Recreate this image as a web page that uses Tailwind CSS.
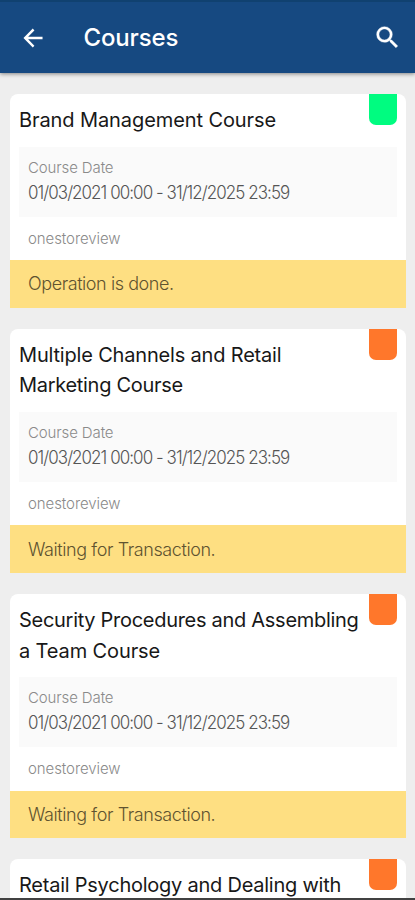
<!DOCTYPE html>
<html lang="en">
<head>
<meta charset="utf-8">
<meta name="viewport" content="width=device-width, initial-scale=1">
<title>Courses</title>
<script src="https://cdn.jsdelivr.net/npm/@tailwindcss/browser@4"></script>
</head>
<body class="h-[900px] overflow-hidden bg-[#eeeeee] font-['Inter',sans-serif]">
<div class="flex h-[900px] flex-col overflow-hidden border-b-2 border-[#414141]">
  <header class="relative z-10 flex h-[72.5px] shrink-0 items-center border-t-2 border-[#104170] bg-[#164981] pl-[20px] pr-[13px] pt-px text-white shadow-[0_1px_4px_rgba(0,0,0,0.45)]">
    <svg class="size-[26px] shrink-0" viewBox="0 0 24 24" fill="currentColor"><path d="M20.8 10.9H7.5l5.8-5.8L11.8 3.2 3.2 12l8.6 8.8 1.5-1.7-5.8-6h13.3z"/></svg>
    <h1 class="ml-[37.5px] flex-1 whitespace-nowrap text-[24px] font-medium leading-[36px] tracking-[-0.15px]">Courses</h1>
    <svg class="size-[29px] shrink-0" viewBox="0 0 24 24" fill="currentColor" stroke="currentColor" stroke-width=".3"><path d="M15.5 14h-.79l-.28-.27A6.47 6.47 0 0 0 16 9.5 6.5 6.5 0 1 0 9.5 16c1.61 0 3.09-.59 4.23-1.57l.27.28v.79l5 4.99L20.49 19l-4.99-5zm-6 0C7.01 14 5 11.99 5 9.5S7.01 5 9.5 5 14 7.01 14 9.5 11.99 14 9.5 14z"/></svg>
  </header>
  <main class="flex flex-col gap-[21px] pl-[10px] pr-[9px] pt-[21.5px]">
    <article class="relative h-[213.6px] shrink-0 rounded-t-[8px] bg-white">
      <span class="absolute right-[9.5px] top-0 h-[31px] w-[27.5px] rounded-b-[7px] bg-[#00fc80]"></span>
      <h2 class="whitespace-nowrap pl-[9px] pt-[11px] text-[20px] leading-[30.8px] text-[#181818]"><span class="tracking-[-0.09px]">Brand Management Course</span></h2>
      <div class="mx-[9px] mt-[11px] h-[70px] bg-[#fafafa] pl-[9px] pt-[9px]">
        <p class="whitespace-nowrap text-[15px] font-light leading-[23px] text-[#8a8a8a]"><span class="tracking-[-0.12px]">Course Date</span></p>
        <p class="whitespace-nowrap pt-px text-[18px] font-light leading-[26px] text-[#555555]"><span class="inline-block origin-left scale-x-[0.943] tracking-[-1px]">01/03/2021 00:00 - 31/12/2025 23:59</span></p>
      </div>
      <p class="flex h-[43.3px] items-center pl-[18px] pt-px text-[15px] font-light text-[#8a8a8a]"><span class="tracking-[-0.08px]">onestoreview</span></p>
      <p class="flex h-[47.6px] items-center bg-[#fedf82] pl-[18px] text-[18px] font-light text-[#5f5330]"><span class="tracking-[-0.43px]">Operation is done.</span></p>
    </article>
    <article class="relative h-[244.3px] shrink-0 rounded-t-[8px] bg-white">
      <span class="absolute right-[9.5px] top-0 h-[31px] w-[27.5px] rounded-b-[7px] bg-[#ff772b]"></span>
      <h2 class="whitespace-nowrap pl-[9px] pt-[11px] text-[20px] leading-[30.8px] text-[#181818]"><span class="tracking-[-0.18px]">Multiple Channels and Retail</span><br><span class="tracking-[-0.3px]">Marketing Course</span></h2>
      <div class="mx-[9px] mt-[11px] h-[70px] bg-[#fafafa] pl-[9px] pt-[9px]">
        <p class="whitespace-nowrap text-[15px] font-light leading-[23px] text-[#8a8a8a]"><span class="tracking-[-0.12px]">Course Date</span></p>
        <p class="whitespace-nowrap pt-px text-[18px] font-light leading-[26px] text-[#555555]"><span class="inline-block origin-left scale-x-[0.943] tracking-[-1px]">01/03/2021 00:00 - 31/12/2025 23:59</span></p>
      </div>
      <p class="flex h-[43.2px] items-center pl-[18px] pt-px text-[15px] font-light text-[#8a8a8a]"><span class="tracking-[-0.08px]">onestoreview</span></p>
      <p class="flex h-[47.5px] items-center bg-[#fedf82] pl-[18px] text-[18px] font-light text-[#5f5330]"><span class="tracking-[-0.41px]">Waiting for Transaction.</span></p>
    </article>
    <article class="relative h-[244.3px] shrink-0 rounded-t-[8px] bg-white">
      <span class="absolute right-[9.5px] top-0 h-[31px] w-[27.5px] rounded-b-[7px] bg-[#ff772b]"></span>
      <h2 class="whitespace-nowrap pl-[9px] pt-[11px] text-[20px] leading-[30.8px] text-[#181818]"><span class="tracking-[-0.29px]">Security Procedures and Assembling</span><br><span class="tracking-[-0.12px]">a Team Course</span></h2>
      <div class="mx-[9px] mt-[11px] h-[70px] bg-[#fafafa] pl-[9px] pt-[9px]">
        <p class="whitespace-nowrap text-[15px] font-light leading-[23px] text-[#8a8a8a]"><span class="tracking-[-0.12px]">Course Date</span></p>
        <p class="whitespace-nowrap pt-px text-[18px] font-light leading-[26px] text-[#555555]"><span class="inline-block origin-left scale-x-[0.943] tracking-[-1px]">01/03/2021 00:00 - 31/12/2025 23:59</span></p>
      </div>
      <p class="flex h-[43.2px] items-center pl-[18px] pt-px text-[15px] font-light text-[#8a8a8a]"><span class="tracking-[-0.08px]">onestoreview</span></p>
      <p class="flex h-[47.5px] items-center bg-[#fedf82] pl-[18px] text-[18px] font-light text-[#5f5330]"><span class="tracking-[-0.41px]">Waiting for Transaction.</span></p>
    </article>
    <article class="relative h-[244.3px] shrink-0 rounded-t-[8px] bg-white">
      <span class="absolute right-[9.5px] top-0 h-[31px] w-[27.5px] rounded-b-[7px] bg-[#ff772b]"></span>
      <h2 class="whitespace-nowrap pl-[9px] pt-[11px] text-[20px] leading-[30.8px] text-[#181818]"><span class="tracking-[-0.24px]">Retail Psychology and Dealing with</span></h2>
    </article>
  </main>
</div>
</body>
</html>
